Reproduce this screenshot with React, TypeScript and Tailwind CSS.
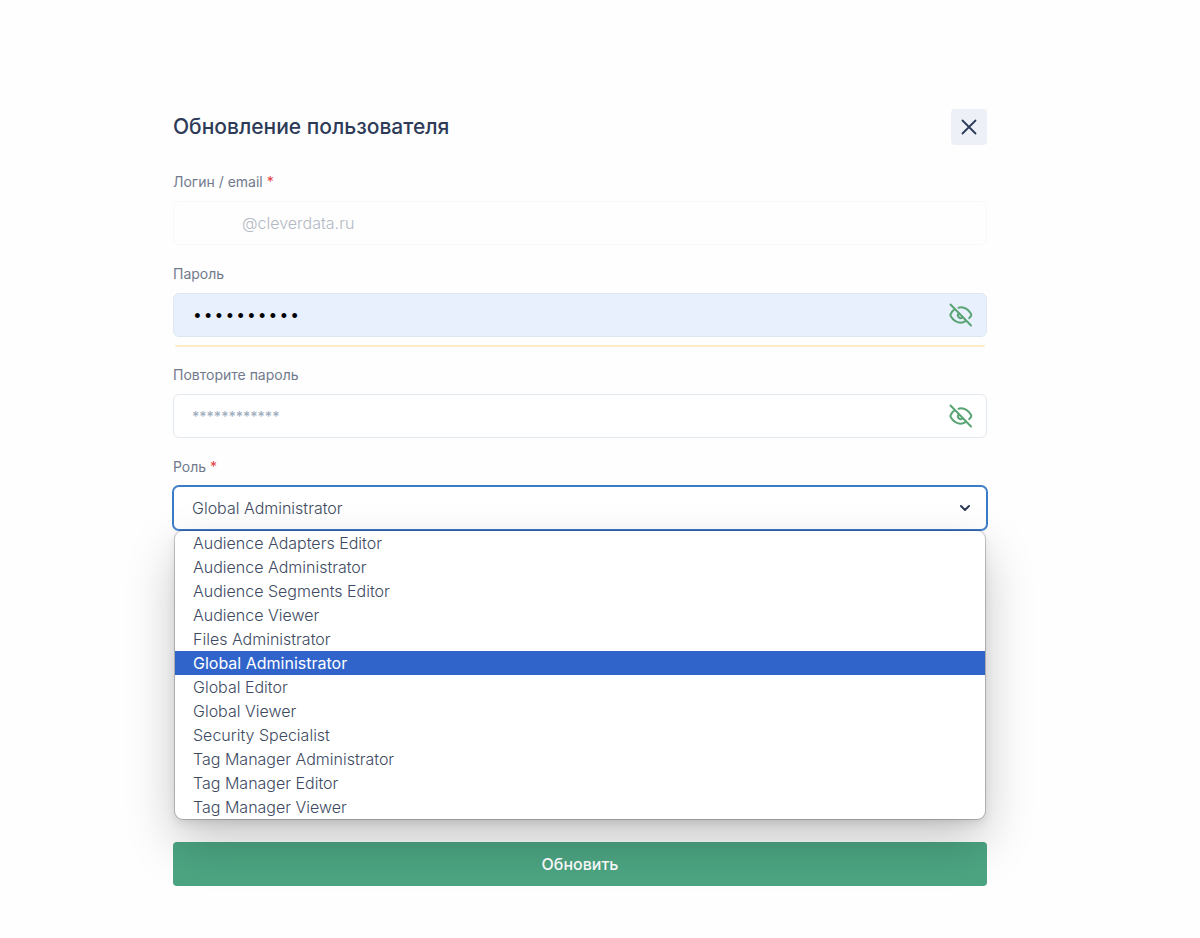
import { useState } from "react";

const ROLES = [
  "Audience Adapters Editor",
  "Audience Administrator",
  "Audience Segments Editor",
  "Audience Viewer",
  "Files Administrator",
  "Global Administrator",
  "Global Editor",
  "Global Viewer",
  "Security Specialist",
  "Tag Manager Administrator",
  "Tag Manager Editor",
  "Tag Manager Viewer",
];

const labelClass = "block text-sm leading-5 text-[#717a8c]";
const inputClass =
  "mt-[9px] block h-11 w-full rounded-md border px-[18px] font-light outline-none";

function EyeOffIcon() {
  return (
    <svg
      width="24"
      height="24"
      viewBox="0 0 24 24"
      fill="none"
      stroke="#5aa474"
      strokeWidth="2"
      strokeLinecap="round"
      aria-hidden="true"
    >
      <path d="M1.5 1.5 22 22.5" />
      <path d="M9.500 4.700C14.500 3.400 19 6.200 22 10.800c.4.700.4 1.500 0 2.200L20.200 15.200" />
      <path d="M5.500 6.300C4 7.500 2.600 9.200 1.700 11c-.4.700-.4 1.300 0 2C5.200 19.300 11.500 21.300 16.500 18.200" />
      <path d="M9.800 10.400a2.700 2.700 0 1 0 3.800 3.900" />
    </svg>
  );
}

function PasswordField({
  id,
  label,
  value,
  filled,
}: {
  id: string;
  label: string;
  value?: string;
  filled?: boolean;
}) {
  const [visible, setVisible] = useState(false);

  return (
    <div>
      <label htmlFor={id} className={labelClass}>
        {label}
      </label>
      <div className="relative">
        <input
          id={id}
          type={visible ? "text" : "password"}
          defaultValue={value}
          placeholder="************"
          className={`${inputClass} pr-14 placeholder:font-medium placeholder:text-[#a0aec0] ${
            filled
              ? "border-[#dfe7f3] bg-[#e8f0fe] pt-1 font-['Liberation_Mono',monospace] text-lg text-black"
              : "border-[#e2e8f0] bg-white text-sm text-[#4a5568]"
          }`}
        />
        <button
          type="button"
          aria-label="Показать пароль"
          onClick={() => setVisible(!visible)}
          className="absolute inset-y-0 right-[14px] flex items-center"
        >
          <EyeOffIcon />
        </button>
      </div>
    </div>
  );
}

export default function App() {
  const [role, setRole] = useState("Global Administrator");

  return (
    <main className="min-h-screen bg-[#fefefe] pt-[109px] pr-[213px] pb-12 pl-[173px] font-['Inter',sans-serif]">
      <header className="flex items-center justify-between">
        <h1 className="text-[21px] leading-7 font-medium text-[#2d3b58]">
          Обновление пользователя
        </h1>
        <button
          type="button"
          aria-label="Закрыть"
          className="grid h-9 w-9 place-items-center rounded-sm bg-[#edf1f7]"
        >
          <svg width="16" height="16" viewBox="0 0 16 16" stroke="#2d3b58" strokeWidth="1.8" strokeLinecap="round">
            <path d="M1.500 1.500 14.500 14.500M14.500 1.500 1.500 14.500" />
          </svg>
        </button>
      </header>

      <form className="mt-[27px]" onSubmit={(e) => e.preventDefault()}>
        <label htmlFor="login" className={labelClass}>
          Логин / email <span className="text-[#e53e3e]">*</span>
        </label>
        <input
          id="login"
          type="text"
          disabled
          defaultValue="@cleverdata.ru"
          className={`${inputClass} border-[#f7f8fa] pl-[68px] text-base text-[#b3b9c4]`}
        />

        <div className="mt-[19px]">
          <PasswordField id="password" label="Пароль" value="qwerty1234" filled />
          {/* password strength */}
          <div className="mx-0.5 mt-2 h-0.5 rounded-full bg-[#feebc8]" />
        </div>

        <div className="mt-[18px]">
          <PasswordField id="repeat" label="Повторите пароль" />
        </div>

        <div className="mt-[19px]">
          <label htmlFor="role" className={labelClass}>
            Роль <span className="text-[#e53e3e]">*</span>
          </label>
          <div className="relative">
            <select
              id="role"
              value={role}
              onChange={(e) => setRole(e.target.value)}
              className={`${inputClass} appearance-none border-[#3a7bc8] bg-white text-base text-[#3d4a61] ring-1 ring-[#3a7bc8]`}
            >
              {ROLES.map((r) => (
                <option key={r}>{r}</option>
              ))}
            </select>
            <svg
              className="pointer-events-none absolute inset-y-0 right-4 my-auto"
              width="12"
              height="12"
              viewBox="0 0 12 12"
              fill="none"
              stroke="#2d3b58"
              strokeWidth="2"
              strokeLinecap="round"
              strokeLinejoin="round"
            >
              <path d="M2 4l4 4 4-4" />
            </svg>
          </div>
          <ul
            role="listbox"
            aria-label="Роль"
            className="relative z-10 mx-0.5 mt-px overflow-hidden rounded-lg bg-white text-base leading-6 font-light text-[#3d4a61] shadow-[0_0_0_1px_rgba(0,0,0,0.2),0_22px_50px_rgba(0,0,0,0.22),0_4px_10px_rgba(0,0,0,0.1)]"
          >
            {ROLES.map((r) => (
              <li
                key={r}
                role="option"
                aria-selected={r === role}
                onClick={() => setRole(r)}
                className={`px-[18px] ${r === role ? "bg-[#3064cb] font-normal text-white" : ""}`}
              >
                {r}
              </li>
            ))}
          </ul>
        </div>

        <button
          type="submit"
          className="mt-[23px] h-11 w-full rounded-sm bg-[#4ca582] text-base font-medium text-white"
        >
          Обновить
        </button>
      </form>
    </main>
  );
}
